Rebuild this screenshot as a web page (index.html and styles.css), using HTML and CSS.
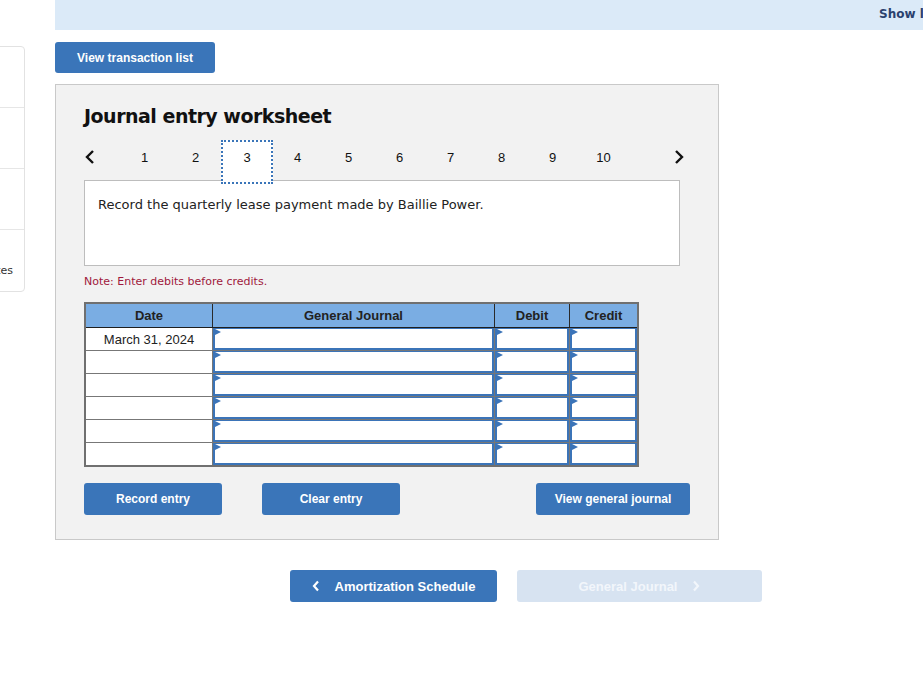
FILE: index.html
```html
<!DOCTYPE html>
<html lang="en">

<head>
    <meta charset="UTF-8">
    <title>Journal entry worksheet</title>
    <link rel="stylesheet" href="styles.css">
</head>

<body>
    <div class="page">
        <!-- Left side list (mostly off screen) -->
        <div class="side">
            <div class="side-card">
                <div class="side-row"></div>
                <div class="side-row"></div>
                <div class="side-row"></div>
                <div class="side-row last"><span>Notes</span></div>
            </div>
        </div>

        <div class="main">
            <div class="topbar"><span>Show less</span></div>

            <button class="btn btn-list">View transaction list</button>

            <!-- Worksheet panel -->
            <div class="panel">
                <h2>Journal entry worksheet</h2>

                <div class="steps">
                    <span class="step-arrow prev">
                        <svg width="12" height="16" viewBox="0 0 12 16"><polyline points="9,2 3,8 9,14" fill="none" stroke="#111" stroke-width="2.4"/></svg>
                    </span>
                    <span class="step">1</span>
                    <span class="step">2</span>
                    <span class="step current">3</span>
                    <span class="step">4</span>
                    <span class="step">5</span>
                    <span class="step">6</span>
                    <span class="step">7</span>
                    <span class="step">8</span>
                    <span class="step">9</span>
                    <span class="step">10</span>
                    <span class="step-arrow next">
                        <svg width="12" height="16" viewBox="0 0 12 16"><polyline points="3,2 9,8 3,14" fill="none" stroke="#111" stroke-width="2.4"/></svg>
                    </span>
                </div>

                <div class="question">Record the quarterly lease payment made by Baillie Power.</div>

                <p class="note">Note: Enter debits before credits.</p>

                <table class="journal">
                    <thead>
                        <tr>
                            <th class="col-date">Date</th>
                            <th class="col-gj">General Journal</th>
                            <th class="col-dr">Debit</th>
                            <th class="col-cr">Credit</th>
                        </tr>
                    </thead>
                    <tbody id="rows"></tbody>
                </table>

                <div class="actions">
                    <button class="btn btn-record">Record entry</button>
                    <button class="btn btn-clear">Clear entry</button>
                    <button class="btn btn-view">View general journal</button>
                </div>
            </div>

            <!-- Bottom navigation -->
            <div class="pager">
                <button class="btn btn-prev">
                    <svg width="8" height="12" viewBox="0 0 8 12"><polyline points="6,1.5 2,6 6,10.5" fill="none" stroke="#fff" stroke-width="2.2"/></svg>
                    <span>Amortization Schedule</span>
                </button>
                <button class="btn btn-next" disabled>
                    <span>General Journal</span>
                    <svg width="8" height="12" viewBox="0 0 8 12"><polyline points="2,1.5 6,6 2,10.5" fill="none" stroke="#f2f6fb" stroke-width="2.2"/></svg>
                </button>
            </div>
        </div>
    </div>

    <script>
        // build the 6 journal rows
        const body = document.getElementById('rows');
        for (let i = 0; i < 6; i++) {
            const row = document.createElement('tr');
            row.innerHTML =
                `<td class="date">${i === 0 ? 'March 31, 2024' : ''}</td>
                <td class="cell"><div class="field"></div></td>
                <td class="cell"><div class="field"></div></td>
                <td class="cell"><div class="field"></div></td>`;
            body.appendChild(row);
        }
    </script>
</body>

</html>
```

FILE: styles.css
```css
/* General */
body {
    margin: 0;
    font-family: 'DejaVu Sans', sans-serif;
    color: #222;
    background: #fff;
    overflow: hidden;
}

.page {
    display: flex;
    min-height: 677px;
}

/* Left side list */
.side {
    width: 55px;
    flex-shrink: 0;
    overflow: hidden;
}

.side-card {
    margin-top: 46px;
    margin-left: -12px;
    width: 35px;
    border: 1px solid #e2e2e2;
    border-radius: 0 4px 4px 0;
    background: #fff;
}

.side-row {
    height: 60px;
    border-bottom: 1px solid #e6e6e6;
    position: relative;
}

.side-row.last {
    border-bottom: none;
    height: 61px;
}

.side-row span {
    position: absolute;
    right: 11px;
    top: 34px;
    font-size: 11px;
    color: #333;
}

/* Main column */
.main {
    flex: 1;
    min-width: 0;
}

.topbar {
    height: 30px;
    background: #dbeaf8;
    padding-left: 824px;
    white-space: nowrap;
    overflow: hidden;
    font-size: 12px;
    font-weight: bold;
    line-height: 29px;
    color: #2a416e;
}

/* Buttons */
.btn {
    font-family: 'Liberation Sans', Arial, sans-serif;
    font-weight: bold;
    font-size: 12px;
    color: #fff;
    background: #3a75b9;
    border: none;
    border-radius: 3px;
    height: 32px;
    padding: 0;
    cursor: pointer;
}

.btn-list {
    display: block;
    margin-top: 12px;
    width: 160px;
    height: 31px;
}

/* Worksheet panel */
.panel {
    margin-top: 11px;
    width: 634px;
    height: 454px;
    background: #f2f2f2;
    border: 1px solid #c9c9c9;
    padding: 0 0 0 28px;
}

.panel h2 {
    margin: 19px 0 0;
    font-size: 19px;
    line-height: 24px;
    color: #111;
    letter-spacing: -0.5px;
}

/* Step tabs */
.steps {
    display: flex;
    align-items: flex-start;
    height: 42px;
    margin-top: 12px;
    margin-bottom: -2px;
    position: relative;
    z-index: 1;
}

.step-arrow {
    display: flex;
    align-items: center;
    padding-top: 9px;
}

.step-arrow.prev {
    width: 35px;
}

.step-arrow.next {
    margin-left: 44px;
}

.step {
    width: 51px;
    height: 44px;
    box-sizing: border-box;
    padding-top: 10px;
    text-align: center;
    font-family: 'Liberation Sans', Arial, sans-serif;
    font-size: 13px;
    line-height: 15px;
    color: #111;
}

.step.current {
    background: #fff;
    border: 2px dotted #3a75b9;
    padding-top: 8px;
    width: 52px;
    margin-right: -1px;
}

/* Question */
.question {
    width: 596px;
    height: 86px;
    box-sizing: border-box;
    background: #fff;
    border: 1px solid #bdbdbd;
    padding: 16px 13px;
    font-size: 13px;
    line-height: 16px;
    color: #222;
}

.note {
    margin: 9px 0 0;
    font-size: 11px;
    line-height: 14px;
    color: #a0183c;
}

/* Journal table */
.journal {
    margin-top: 13px;
    border-collapse: collapse;
    width: 555px;
    font-family: 'Liberation Sans', Arial, sans-serif;
    font-size: 13px;
    border: 2px solid #707070;
}

.journal th {
    background: #7aade3;
    height: 23px;
    padding: 0;
    font-weight: bold;
    color: #222;
    border-right: 1px solid #2a2a2a;
    border-bottom: 1px solid #1e1e1e;
}

.journal th:last-child {
    border-right: none;
}

.col-date { width: 126px; }
.col-gj { width: 281px; }
.col-dr { width: 74px; }

.journal td {
    height: 22px;
    padding: 0;
    border: 1px solid #777;
    background: #fff;
}

.journal td.date {
    text-align: center;
    color: #222;
}

.journal td.cell {
    position: relative;
}

.field {
    height: 22px;
    box-sizing: border-box;
    border: 2px solid #3b74b8;
    border-top-width: 1px;
    background: #fff;
    position: relative;
}

/* little triangle marker on inputs */
.field::before {
    content: '';
    position: absolute;
    left: 0;
    top: 0;
    border-left: 6px solid #3b74b8;
    border-top: 3px solid transparent;
    border-bottom: 3px solid transparent;
}

/* Action buttons */
.actions {
    display: flex;
    margin-top: 16px;
}

.btn-record,
.btn-clear {
    width: 138px;
    margin-right: 40px;
}

.btn-view {
    width: 154px;
    margin-left: 96px;
}

/* Bottom pager */
.pager {
    display: flex;
    gap: 20px;
    margin-top: 30px;
    margin-left: 235px;
}

.pager .btn {
    display: flex;
    align-items: center;
    justify-content: center;
    gap: 15px;
    font-size: 13px;
}

.btn-prev {
    width: 207px;
}

.btn-next {
    width: 245px;
    background: #d7e3f1;
    color: #f2f6fb;
    cursor: default;
}
```
